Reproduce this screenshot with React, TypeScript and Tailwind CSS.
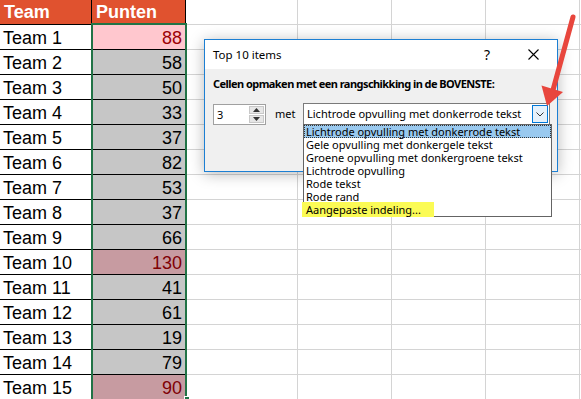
import React from 'react';

const scores = [88, 58, 50, 33, 37, 82, 53, 37, 66, 130, 41, 61, 19, 79, 90];

const options = [
  'Lichtrode opvulling met donkerrode tekst',
  'Gele opvulling met donkergele tekst',
  'Groene opvulling met donkergroene tekst',
  'Lichtrode opvulling',
  'Rode tekst',
  'Rode rand',
];

const EmptyCells = () => (
  <>
    <div className="w-[112px] shrink-0 border-r border-b border-[#d4d4d4]" />
    <div className="w-[94px] shrink-0 border-r border-b border-[#d4d4d4]" />
    <div className="w-[94px] shrink-0 border-r border-b border-[#d4d4d4]" />
    <div className="w-[94px] shrink-0 border-r border-b border-[#d4d4d4]" />
    <div className="flex-1 border-b border-[#d4d4d4]" />
  </>
);

const cellStyle = (i: number) => {
  if (i === 0) return 'bg-[#ffc7ce] text-[#9c0006]';
  if (i === 9 || i === 14) return 'bg-[#c79ba1] text-[#7f0005]';
  return 'bg-[#c6c6c6] text-black';
};

const Sheet = () => (
  <div className="flex flex-col font-['Liberation_Sans',Arial,sans-serif] text-[18px]">
    <div className="flex h-[25px]">
      <div className="w-[92px] shrink-0 bg-[#e0522f] border-r border-b border-black flex items-end pl-[4px] pb-[2px] leading-[20px] font-bold text-white">
        Team
      </div>
      <div className="w-[94px] shrink-0 bg-[#e0522f] border-r border-b border-black flex items-end pl-[4px] pb-[2px] leading-[20px] font-bold text-white">
        Punten
      </div>
      <EmptyCells />
    </div>
    {scores.map((v, i) => (
      <div key={i} className="flex h-[25px]">
        <div className="w-[92px] shrink-0 border-r border-b border-black flex items-end pl-[3px] pb-[1px] leading-[20px] text-black">
          Team {i + 1}
        </div>
        <div className={`w-[94px] shrink-0 border-r border-b border-black flex items-end justify-end pr-[3px] pb-[1px] leading-[20px] ${cellStyle(i)}`}>
          {v}
        </div>
        <EmptyCells />
      </div>
    ))}
  </div>
);

const Dialog = () => (
  <div className="absolute left-[204px] top-[39px] w-[354px] h-[133px] border border-[#1c7fd3] bg-[#f0f0f0] shadow-[0_2px_14px_rgba(0,0,0,0.28)] font-['Noto_Sans',sans-serif] text-[11px] text-black">
    <div className="h-[29px] bg-white flex items-center pl-[8px]">
      <span className="flex-1 text-[11.5px]">Top 10 items</span>
      <span className="w-[10px] text-[14px] mr-[34px]">?</span>
      <svg width="11" height="11" viewBox="0 0 11 11" className="mr-[18px]">
        <path d="M0.5 0.5 L10.5 10.5 M10.5 0.5 L0.5 10.5" stroke="#000" strokeWidth="1.1" />
      </svg>
    </div>
    <div className="pl-[8px] pt-[7px]">
      <div className="font-bold leading-[16px] tracking-[-0.55px]">
        Cellen opmaken met een rangschikking in de BOVENSTE:
      </div>
      <div className="flex items-center mt-[11px]">
        <div className="w-[53px] h-[21px] mt-[1px] border border-[#a0a0a0] bg-white flex items-center">
          <span className="flex-1 pl-[3px] leading-[16px]">3</span>
          <div className="w-[16px] h-full flex flex-col gap-[1px] py-[1px] pr-[1px]">
            <div className="flex-1 bg-[#e6e6e6] border border-[#c8c8c8] flex items-center justify-center">
              <svg width="7" height="4" viewBox="0 0 7 4"><path d="M0 4 L3.5 0 L7 4 Z" fill="#333" /></svg>
            </div>
            <div className="flex-1 bg-[#e6e6e6] border border-[#c8c8c8] flex items-center justify-center">
              <svg width="7" height="4" viewBox="0 0 7 4"><path d="M0 0 L3.5 4 L7 0 Z" fill="#333" /></svg>
            </div>
          </div>
        </div>
        <span className="ml-[9px] w-[28px]">met</span>
        <div className="relative w-[247px] h-[22px] border border-[#7a7a7a] bg-white flex items-center">
          <span className="flex-1 pl-[3px] leading-[16px] whitespace-nowrap">
            Lichtrode opvulling met donkerrode tekst
          </span>
          <div className="w-[16px] h-[18px] mr-[1px] border border-[#0078d7] bg-[#e5f1fb] flex items-center justify-center">
            <svg width="8" height="5" viewBox="0 0 8 5">
              <path d="M0.5 0.5 L4 4 L7.5 0.5" stroke="#333" strokeWidth="1" fill="none" />
            </svg>
          </div>
          <div className="absolute -left-[1px] top-full w-[249px] border border-[#646464] bg-white">
            {options.map((o, i) => (
              <div
                key={o}
                className={`h-[13px] flex items-center pl-[2px] leading-[13px] whitespace-nowrap ${
                  i === 0 ? 'bg-[#99c9ef] outline outline-1 outline-dotted outline-[#333] -outline-offset-1' : ''
                }`}
              >
                {o}
              </div>
            ))}
            <div className="relative h-[13px] flex items-center pl-[2px] leading-[13px] whitespace-nowrap">
              <div className="absolute -left-[2px] -top-[1px] w-[132px] h-[15px] bg-[#fbfb55]" />
              <span className="relative">Aangepaste indeling...</span>
            </div>
          </div>
        </div>
      </div>
    </div>
  </div>
);

export default function App() {
  return (
    <div className="relative w-[581px] h-[399px] overflow-hidden bg-white">
      <Sheet />
      <div className="absolute left-[91px] top-[23px] w-[96px] h-[378px] border-2 border-[#217346]" />
      <div className="absolute left-[184px] top-[396px] w-[6px] h-[6px] bg-[#217346] border border-white" />
      <Dialog />
      <svg className="absolute left-0 top-0" width="581" height="399" viewBox="0 0 581 399">
        <line x1="573" y1="17" x2="553" y2="90" stroke="#e8463d" strokeWidth="5" strokeLinecap="round" />
        <polygon points="547,106 541.5,85.5 563,92" fill="#e8463d" />
      </svg>
    </div>
  );
}
